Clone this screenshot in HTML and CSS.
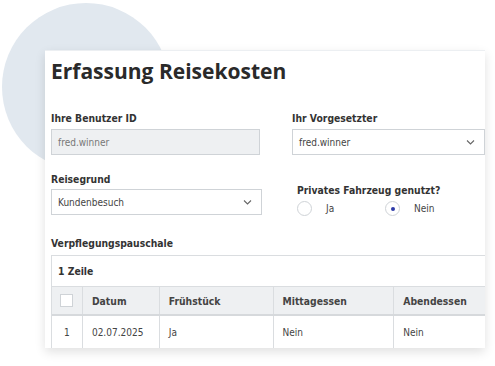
FILE: index.html
```html
<!DOCTYPE html>
<html>
<head>
<meta name="viewport" content="width=device-width, initial-scale=1">
<link rel="stylesheet" href="styles.css">
</head>
<body>
  <div class="scene">
    <div class="blob"></div>

    <div class="card">
      <h1 class="title">Erfassung Reisekosten</h1>

      <div class="row row-top">
        <div class="field field-left">
          <label class="label">Ihre Benutzer ID</label>
          <div class="input input-readonly">fred.winner</div>
        </div>
        <div class="field field-right">
          <label class="label">Ihr Vorgesetzter</label>
          <div class="input select select-wide">
            <span>fred.winner</span>
            <svg class="chevron" width="9" height="5" viewBox="0 0 9 5"><path d="M1 .5l3.5 3.5 3.5-3.5" fill="none" stroke="#666" stroke-width="1.1"/></svg>
          </div>
        </div>
      </div>

      <div class="row row-second">
        <div class="field field-left">
          <label class="label">Reisegrund</label>
          <div class="input select select-reason">
            <span>Kundenbesuch</span>
            <svg class="chevron" width="9" height="5" viewBox="0 0 9 5"><path d="M1 .5l3.5 3.5 3.5-3.5" fill="none" stroke="#666" stroke-width="1.1"/></svg>
          </div>
        </div>
        <div class="field field-radio">
          <label class="label">Privates Fahrzeug genutzt?</label>
          <div class="radios">
            <span class="radio-item"><span class="radio"></span>Ja</span>
            <span class="radio-item"><span class="radio radio-on"></span>Nein</span>
          </div>
        </div>
      </div>

      <div class="label section-label">Verpflegungspauschale</div>

      <div class="table">
        <div class="table-caption">1 Zeile</div>
        <div class="trow thead">
          <div class="cell c-check"><span class="checkbox"></span></div>
          <div class="cell c-date">Datum</div>
          <div class="cell c-fr">Frühstück</div>
          <div class="cell c-mi">Mittagessen</div>
          <div class="cell c-ab">Abendessen</div>
        </div>
        <div class="trow">
          <div class="cell c-check num">1</div>
          <div class="cell c-date">02.07.2025</div>
          <div class="cell c-fr">Ja</div>
          <div class="cell c-mi">Nein</div>
          <div class="cell c-ab">Nein</div>
        </div>
      </div>
    </div>
  </div>
</body>
</html>
```

FILE: styles.css
```css
* {
  box-sizing: border-box;
}

body {
  margin: 0;
  background: #fff;
  font-family: "DejaVu Sans Condensed", "DejaVu Sans", sans-serif;
  color: #333;
}

.scene {
  position: relative;
  width: 495px;
  height: 366px;
  overflow: hidden;
  padding: 50px 0 0 45px;
}

/* soft circle behind the card */
.blob {
  position: absolute;
  left: 2px;
  top: 3px;
  width: 168px;
  height: 168px;
  border-radius: 50%;
  background: #e1e8ef;
}

.card {
  position: relative;
  width: 440px;
  height: 298px;
  background: #fff;
  overflow: hidden;
  padding-left: 6px;
  border-top: 1px solid #eceff2;
  box-shadow: 0 4px 10px rgba(0, 0, 0, 0.12);
}

.title {
  margin: 0;
  padding-top: 6px;
  height: 60px;
  font-family: "Open Sans", sans-serif;
  font-size: 21px;
  font-weight: 700;
  color: #2a2a2a;
}

.row {
  display: flex;
  width: 600px;
}

.label {
  display: block;
  font-size: 10.3px;
  font-weight: 700;
  color: #333;
  height: 14px;
  line-height: 14px;
}

.field-left {
  width: 241px;
}

.input {
  height: 26px;
  border: 1px solid #cfd3d7;
  background: #fff;
  font-size: 10px;
  color: #444;
  padding: 0 6px;
  display: flex;
  align-items: center;
  margin-top: 4px;
}

.input-readonly {
  width: 209px;
  background: #eef0f2;
  color: #777;
}

.select {
  justify-content: space-between;
  padding-right: 9px;
}

.select-wide {
  width: 193px;
}

.select-reason {
  width: 211px;
  margin-top: 3px;
}

.row-second {
  margin-top: 17px;
}

.field-radio {
  margin-left: 5px;
  padding-top: 11px;
}

.radios {
  display: flex;
  margin-top: 4px;
  font-size: 10px;
  color: #444;
}

.radio-item {
  display: flex;
  align-items: center;
  width: 88px;
}

.radio {
  width: 15px;
  height: 15px;
  border: 1px solid #cfd3d7;
  border-radius: 50%;
  margin-right: 14px;
  display: flex;
  align-items: center;
  justify-content: center;
}

.radio-on::after {
  content: "";
  width: 4px;
  height: 4px;
  border-radius: 50%;
  background: #2e3aa8;
}

.section-label {
  margin-top: 20px;
}

.table {
  margin-top: 5px;
  width: 460px;
  border: 1px solid #dadde0;
  border-right: none;
}

.table-caption {
  height: 31px;
  line-height: 31px;
  padding-left: 6px;
  font-size: 10.3px;
  font-weight: 700;
  border-bottom: 1px solid #dadde0;
}

.trow {
  display: flex;
  height: 32px;
}

.thead {
  height: 29px;
  background: #eef0f2;
  font-weight: 700;
  border-bottom: 2px solid #d6d9dc;
}

.cell {
  display: flex;
  align-items: center;
  padding-left: 9px;
  font-size: 10px;
  border-right: 1px solid #dadde0;
}

.thead .cell {
  font-size: 10.3px;
  color: #333;
}

.trow .cell {
  color: #444;
}

.c-check {
  width: 31px;
  padding-left: 0;
  justify-content: center;
}

.c-date {
  width: 77px;
}

.c-fr {
  width: 114px;
}

.c-mi {
  width: 121px;
}

.c-ab {
  width: 117px;
}

.checkbox {
  width: 13px;
  height: 13px;
  background: #fff;
  border: 1px solid #cfd3d7;
}
```
